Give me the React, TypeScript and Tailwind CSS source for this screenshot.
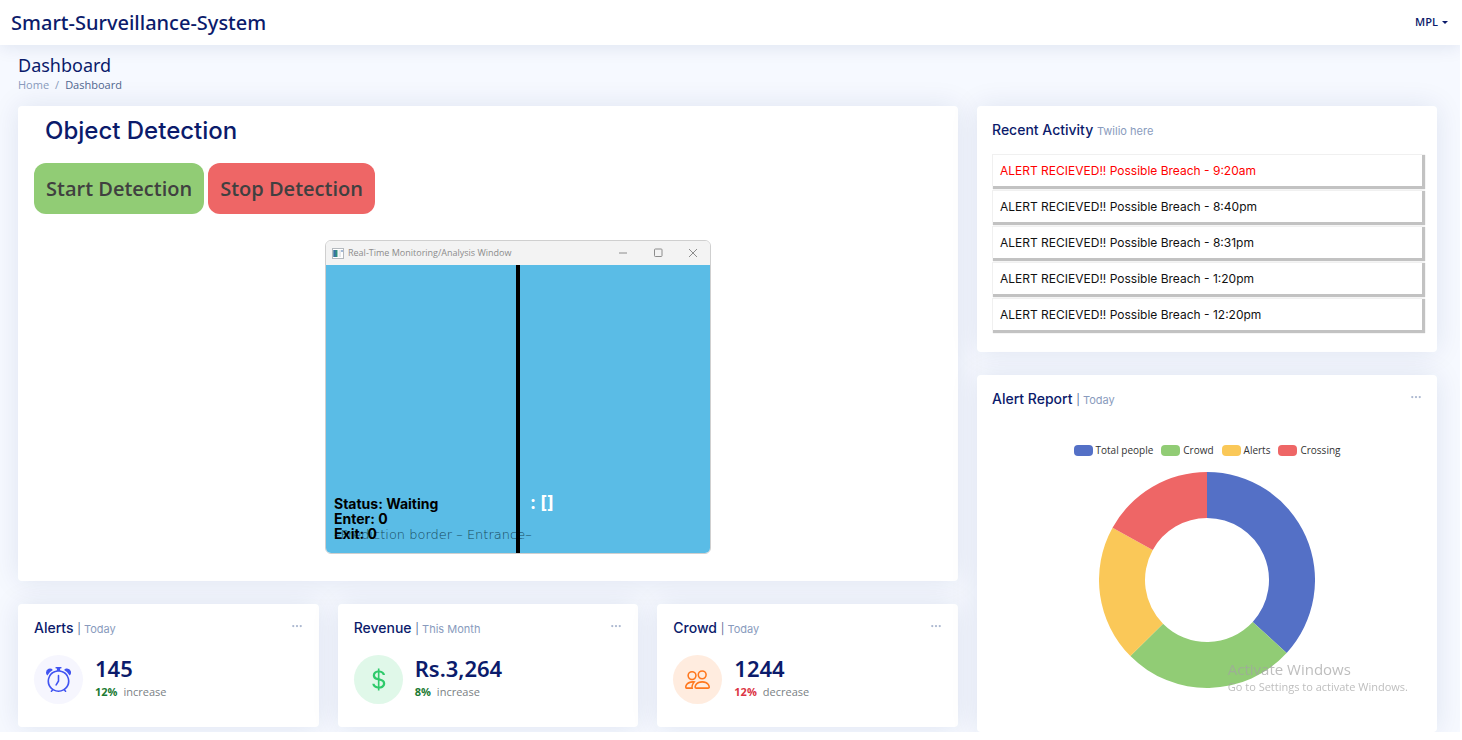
import type { ReactNode } from "react";
import { BsAlarm, BsCurrencyDollar, BsPeople, BsThreeDots } from "react-icons/bs";

const cardClass = "rounded bg-white shadow-[0_0_28px_rgba(1,41,112,0.1)]";

function MoreButton() {
  return (
    <button type="button" aria-label="More options" className="pt-0.5 text-[#aab7cf]">
      <BsThreeDots className="size-3" />
    </button>
  );
}

function CardTitle({ title, note, divided = true }: { title: string; note: string; divided?: boolean }) {
  return (
    <h2 className="font-['Inter',sans-serif] text-[14px] leading-5 font-medium text-[#0b1b6b]">
      {title}{" "}
      <span className="text-[11px] font-normal text-[#899bbd]">
        {divided && <span className="text-[#5c6f9c]">| </span>}
        {note}
      </span>
    </h2>
  );
}

type StatProps = {
  title: string;
  note: string;
  value: string;
  percent: string;
  trend: string;
  percentClass: string;
  circleClass: string;
  icon: ReactNode;
};

function StatCard({ title, note, value, percent, trend, percentClass, circleClass, icon }: StatProps) {
  return (
    <section className={`${cardClass} px-4 pt-3.5 pb-[23px]`}>
      <div className="flex items-start justify-between">
        <CardTitle title={title} note={note} />
        <MoreButton />
      </div>
      <div className="mt-[15px] flex items-center gap-3">
        <div className={`flex size-[49px] items-center justify-center rounded-full ${circleClass}`}>{icon}</div>
        <div className="pb-0.5 font-['Open_Sans',sans-serif]">
          <p className="font-['Noto_Sans',sans-serif] text-[22px] leading-7 font-semibold text-[#0b1b6b]">{value}</p>
          <p className="text-[11px] leading-5 text-[#7a7f85]">
            <span className={`font-bold ${percentClass}`}>{percent}</span>
            <span className="pl-1.5">{trend}</span>
          </p>
        </div>
      </div>
    </section>
  );
}

const stats: StatProps[] = [
  {
    title: "Alerts",
    note: "Today",
    value: "145",
    percent: "12%",
    trend: "increase",
    percentClass: "text-[#1b7a33]",
    circleClass: "bg-[#f6f6fe] text-[#4154f1]",
    icon: <BsAlarm className="size-[25px]" />,
  },
  {
    title: "Revenue",
    note: "This Month",
    value: "Rs.3,264",
    percent: "8%",
    trend: "increase",
    percentClass: "text-[#1b7a33]",
    circleClass: "bg-[#e0f8e9] text-[#2eca6a]",
    icon: <BsCurrencyDollar className="size-[25px]" />,
  },
  {
    title: "Crowd",
    note: "Today",
    value: "1244",
    percent: "12%",
    trend: "decrease",
    percentClass: "text-[#dc3545]",
    circleClass: "bg-[#ffecdf] text-[#ff771d]",
    icon: <BsPeople className="size-[25px]" />,
  },
];

const activity = [
  { time: "9:20am", fresh: true },
  { time: "8:40pm", fresh: false },
  { time: "8:31pm", fresh: false },
  { time: "1:20pm", fresh: false },
  { time: "12:20pm", fresh: false },
];

const legend = [
  { label: "Total people", swatch: "bg-[#5470c6]" },
  { label: "Crowd", swatch: "bg-[#91cc75]" },
  { label: "Alerts", swatch: "bg-[#fac858]" },
  { label: "Crossing", swatch: "bg-[#ee6666]" },
];

const slices = [
  { from: 0, to: 132.5, color: "#5470c6" },
  { from: 132.5, to: 225.2, color: "#91cc75" },
  { from: 225.2, to: 299, color: "#fac858" },
  { from: 299, to: 360, color: "#ee6666" },
];

function point(radius: number, degrees: number) {
  const angle = (degrees * Math.PI) / 180;
  return `${(108 + radius * Math.sin(angle)).toFixed(2)} ${(108 - radius * Math.cos(angle)).toFixed(2)}`;
}

function slicePath(from: number, to: number) {
  return `M${point(108, from)}A108 108 0 0 1 ${point(108, to)}L${point(62, to)}A62 62 0 0 0 ${point(62, from)}Z`;
}

function Donut() {
  return (
    <svg viewBox="0 0 216 216" role="img" aria-label="Alert report chart" className="mx-auto size-[216px]">
      {slices.map((s) => (
        <path key={s.color} d={slicePath(s.from, s.to)} fill={s.color} />
      ))}
    </svg>
  );
}

function MonitorWindow() {
  return (
    <div className="w-[386px] overflow-hidden rounded-md border border-[#cfcfcf]">
      <div className="flex h-6 items-center bg-[#f3f3f3] pr-3 pl-1.5 font-['Open_Sans',sans-serif] text-[9px] text-[#8c8c8c]">
        <svg viewBox="0 0 12 11" className="mr-1 h-[11px] w-3">
          <rect x="0.5" y="0.5" width="11" height="10" fill="#fff" stroke="#b4b9be" />
          <rect x="1.5" y="2" width="4" height="7" fill="#2f8f7f" />
          <rect x="1.5" y="2" width="2" height="7" fill="#3a6ea5" />
          <rect x="6.500" y="2" width="2.500" height="7" fill="#e6e9ec" />
          <rect x="9.500" y="2" width="1" height="2" fill="#4a77b0" />
        </svg>
        <span className="flex-1">Real-Time Monitoring/Analysis Window</span>
        <div className="flex items-center gap-[25px]">
          <button type="button" aria-label="Minimize">
            <svg viewBox="0 0 10 10" className="size-2.5" fill="none" stroke="#8c8c8c">
              <path d="M1 5H9" />
            </svg>
          </button>
          <button type="button" aria-label="Maximize">
            <svg viewBox="0 0 10 10" className="size-2.5" fill="none" stroke="#8c8c8c">
              <rect x="1.5" y="1" width="7.500" height="7.500" rx="0.8" />
            </svg>
          </button>
          <button type="button" aria-label="Close">
            <svg viewBox="0 0 10 10" className="size-2.5" fill="none" stroke="#8c8c8c">
              <path d="M1 1L9 9M9 1L1 9" />
            </svg>
          </button>
        </div>
      </div>
      <div className="relative flex h-[288px] items-end bg-[#5abce6] px-2 pb-3 font-['Inter',sans-serif]">
        <p className="absolute bottom-2.5 left-2 font-['DejaVu_Sans',sans-serif] text-[13px] leading-4 font-extralight whitespace-nowrap text-[#174a5e]">
          –Prediction border – Entrance–
        </p>
        <div className="absolute inset-y-0 left-1/2 w-1 -translate-x-1/2 bg-black" />
        <div className="relative w-1/2 text-[14px] leading-[15px] font-bold text-black">
          <p>Status: Waiting</p>
          <p>Enter: 0</p>
          <p>Exit: 0</p>
        </div>
        <p className="relative self-end pb-7 pl-3 text-[18px] leading-5 font-bold text-white">: []</p>
      </div>
    </div>
  );
}

export default function App() {
  return (
    <div className="h-screen overflow-hidden bg-white pr-0.5 pb-2 font-['Open_Sans',sans-serif]">
      <div className="flex h-full flex-col overflow-hidden bg-[#f6f9ff]">
        <header className="relative flex h-[45px] shrink-0 items-center justify-between bg-white pr-3 pl-[11px] shadow-[0_2px_18px_rgba(1,41,112,0.1)]">
          <a href="#" className="font-['Noto_Sans',sans-serif] text-[20px] leading-6 font-medium text-[#0b1b6b]">
            Smart-Surveillance-System
          </a>
          <button type="button" className="flex items-center gap-1 text-[11px] font-semibold text-[#0b1b6b]">
            MPL
            <span className="border-x-[3px] border-t-[3px] border-x-transparent border-t-[#0b1b6b]" />
          </button>
        </header>

        <main className="flex flex-1 flex-col pr-[23px] pl-[18px]">
          <div className="pt-2 pb-[13px]">
            <h1 className="font-['Noto_Sans',sans-serif] text-[18px] leading-6 text-[#0b1b6b]">Dashboard</h1>
            <nav aria-label="Breadcrumb" className="flex gap-1.5 text-[11px] leading-4 text-[#899bbd]">
              <a href="#">Home</a>
              <span>/</span>
              <span className="text-[#51678f]">Dashboard</span>
            </nav>
          </div>

          <div className="grid flex-1 grid-cols-[47fr_23fr] gap-[19px]">
            <div className="flex flex-col gap-[23px]">
              <section className={`${cardClass} px-4 pt-2.5 pb-[27px]`}>
                <h2 className="pl-[11px] font-['Inter',sans-serif] text-[24px] leading-[30px] font-medium text-[#0b1b6b]">
                  Object Detection
                </h2>
                <div className="mt-[17px] flex gap-1 text-[20px] font-semibold text-[#404040]">
                  <button type="button" className="h-[51px] rounded-xl bg-[#91cc75] px-3">
                    Start Detection
                  </button>
                  <button type="button" className="h-[51px] rounded-xl bg-[#ee6666] px-3">
                    Stop Detection
                  </button>
                </div>
                <div className="mt-[26px] flex justify-center pl-[60px]">
                  <MonitorWindow />
                </div>
              </section>

              <div className="grid grid-cols-3 gap-[19px]">
                {stats.map((s) => (
                  <StatCard key={s.title} {...s} />
                ))}
              </div>
            </div>

            <div className="flex flex-col gap-[23px]">
              <section className={`${cardClass} px-[15px] pt-3.5 pb-[22px]`}>
                <CardTitle title="Recent Activity" note="Twilio here" divided={false} />
                <ul className="mt-[13px] flex flex-col gap-1 font-['Inter',sans-serif] text-[12px] text-[#111111]">
                  {activity.map((a) => (
                    <li
                      key={a.time}
                      className={`flex h-8 items-center border-t border-l border-[#f0f0f0] px-[7px] shadow-[2px_2px_1px_1px_rgba(0,0,0,0.24)] ${a.fresh ? "text-[#ff0000]" : ""}`}
                    >
                      ALERT RECIEVED!! Possible Breach - {a.time}
                    </li>
                  ))}
                </ul>
              </section>

              <section className={`${cardClass} flex-1 px-[15px] pt-3.5`}>
                <div className="flex items-start justify-between">
                  <CardTitle title="Alert Report" note="Today" />
                  <MoreButton />
                </div>
                <ul className="mt-8 mb-3.5 flex justify-center gap-2 text-[10px] leading-4 text-[#333333]">
                  {legend.map((l) => (
                    <li key={l.label} className="flex items-center gap-[3px]">
                      <span className={`h-[11px] w-[19px] rounded-sm ${l.swatch}`} />
                      {l.label}
                    </li>
                  ))}
                </ul>
                <Donut />
              </section>
            </div>
          </div>
        </main>
      </div>

      <div className="pointer-events-none fixed right-[54px] bottom-[45px] text-[#a3a3a3]/70">
        <p className="text-[15px] leading-5">Activate Windows</p>
        <p className="text-[11px] leading-4">Go to Settings to activate Windows.</p>
      </div>
    </div>
  );
}
